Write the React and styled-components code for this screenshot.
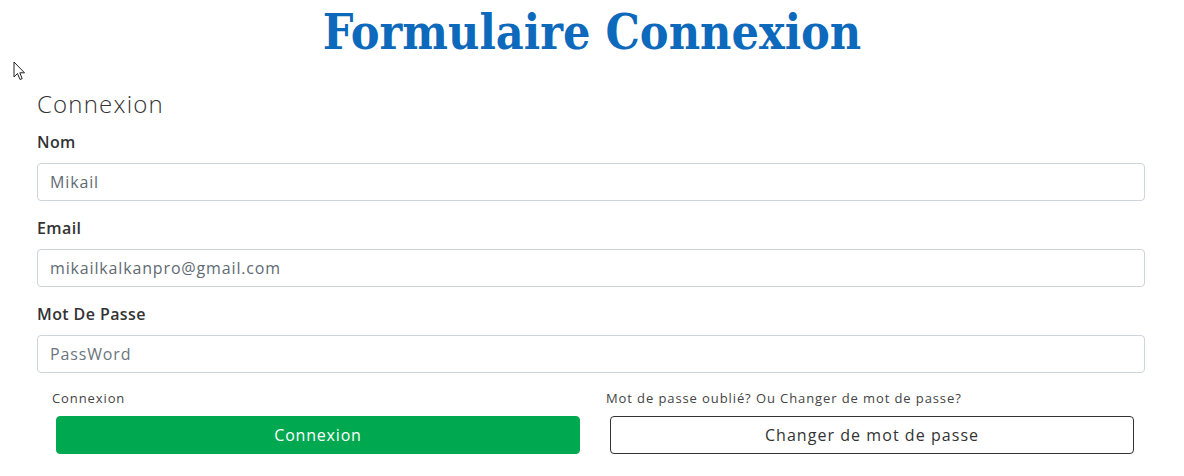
import React from 'react';
import styled, { createGlobalStyle } from 'styled-components';

const GlobalStyle = createGlobalStyle`
  body {
    margin: 0;
    background: #fff;
    font-family: 'Open Sans', 'Lato', sans-serif;
  }
`;

const Page = styled.div`
  position: relative;
  width: 1184px;
  height: 476px;
  overflow: hidden;
`;

const Cursor = styled.svg`
  position: absolute;
  left: 13px;
  top: 61px;
`;

const Title = styled.h1`
  margin: 0;
  padding-top: 4px;
  text-align: center;
  font-family: 'DejaVu Serif', serif;
  font-stretch: condensed;
  font-weight: 700;
  font-size: 48px;
  line-height: 56px;
  color: #0c69bb;
`;

const Form = styled.form`
  margin: 29px 39px 0 37px;
`;

const Heading = styled.h2`
  margin: 0 0 13px;
  font-weight: 300;
  font-size: 24px;
  line-height: 30px;
  letter-spacing: 1.2px;
  color: #333;
`;

const Field = styled.div`
  margin-bottom: 17px;
`;

const Label = styled.label`
  display: block;
  font-weight: 600;
  font-size: 16px;
  line-height: 20px;
  letter-spacing: 0.4px;
  color: #333;
  margin-bottom: 11px;
`;

const Input = styled.input`
  display: block;
  box-sizing: border-box;
  width: 100%;
  height: 38px;
  padding: 0 12px;
  border: 1px solid #ced4da;
  border-radius: 4px;
  font-family: inherit;
  font-size: 16px;
  letter-spacing: 0.85px;
  color: #5f6b73;
  background: #fff;

  &::placeholder {
    color: #6c757d;
  }
`;

const Actions = styled.div`
  display: grid;
  grid-template-columns: 1fr 1fr;
`;

const Column = styled.div`
  padding: 0 11px 0 15px;
`;

const Hint = styled.div`
  font-size: 13px;
  line-height: 16px;
  color: #444;
  letter-spacing: 0.9px;
  margin-bottom: 10px;
`;

const Button = styled.button`
  display: block;
  box-sizing: border-box;
  width: calc(100% - 4px);
  margin-left: 4px;
  height: 38px;
  border-radius: 4px;
  font-family: inherit;
  font-size: 16px;
  letter-spacing: ${p => (p.$primary ? '0.8px' : '1.05px')};
  cursor: pointer;
  border: 1px solid ${p => (p.$primary ? '#00a94f' : '#333')};
  background: ${p => (p.$primary ? '#00a94f' : '#fff')};
  color: ${p => (p.$primary ? '#fff' : '#333')};
`;

export default function App() {
  return (
    <Page>
      <GlobalStyle />
      <Cursor width="14" height="21" viewBox="0 0 14 21">
        <path
          d="M1 1 L1 16 L4.5 12.5 L7 18.5 L9.2 17.6 L6.8 11.8 L11.5 11.8 Z"
          fill="#fff"
          stroke="#222"
          strokeWidth="1"
          strokeLinejoin="round"
        />
      </Cursor>
      <Title>Formulaire Connexion</Title>
      <Form onSubmit={e => e.preventDefault()}>
        <Heading>Connexion</Heading>
        <Field>
          <Label>Nom</Label>
          <Input defaultValue="Mikail" />
        </Field>
        <Field>
          <Label>Email</Label>
          <Input defaultValue="mikailkalkanpro@gmail.com" />
        </Field>
        <Field>
          <Label>Mot De Passe</Label>
          <Input type="text" placeholder="PassWord" />
        </Field>
        <Actions>
          <Column>
            <Hint>Connexion</Hint>
            <Button $primary>Connexion</Button>
          </Column>
          <Column>
            <Hint>Mot de passe oublié? Ou Changer de mot de passe?</Hint>
            <Button>Changer de mot de passe</Button>
          </Column>
        </Actions>
      </Form>
    </Page>
  );
}
